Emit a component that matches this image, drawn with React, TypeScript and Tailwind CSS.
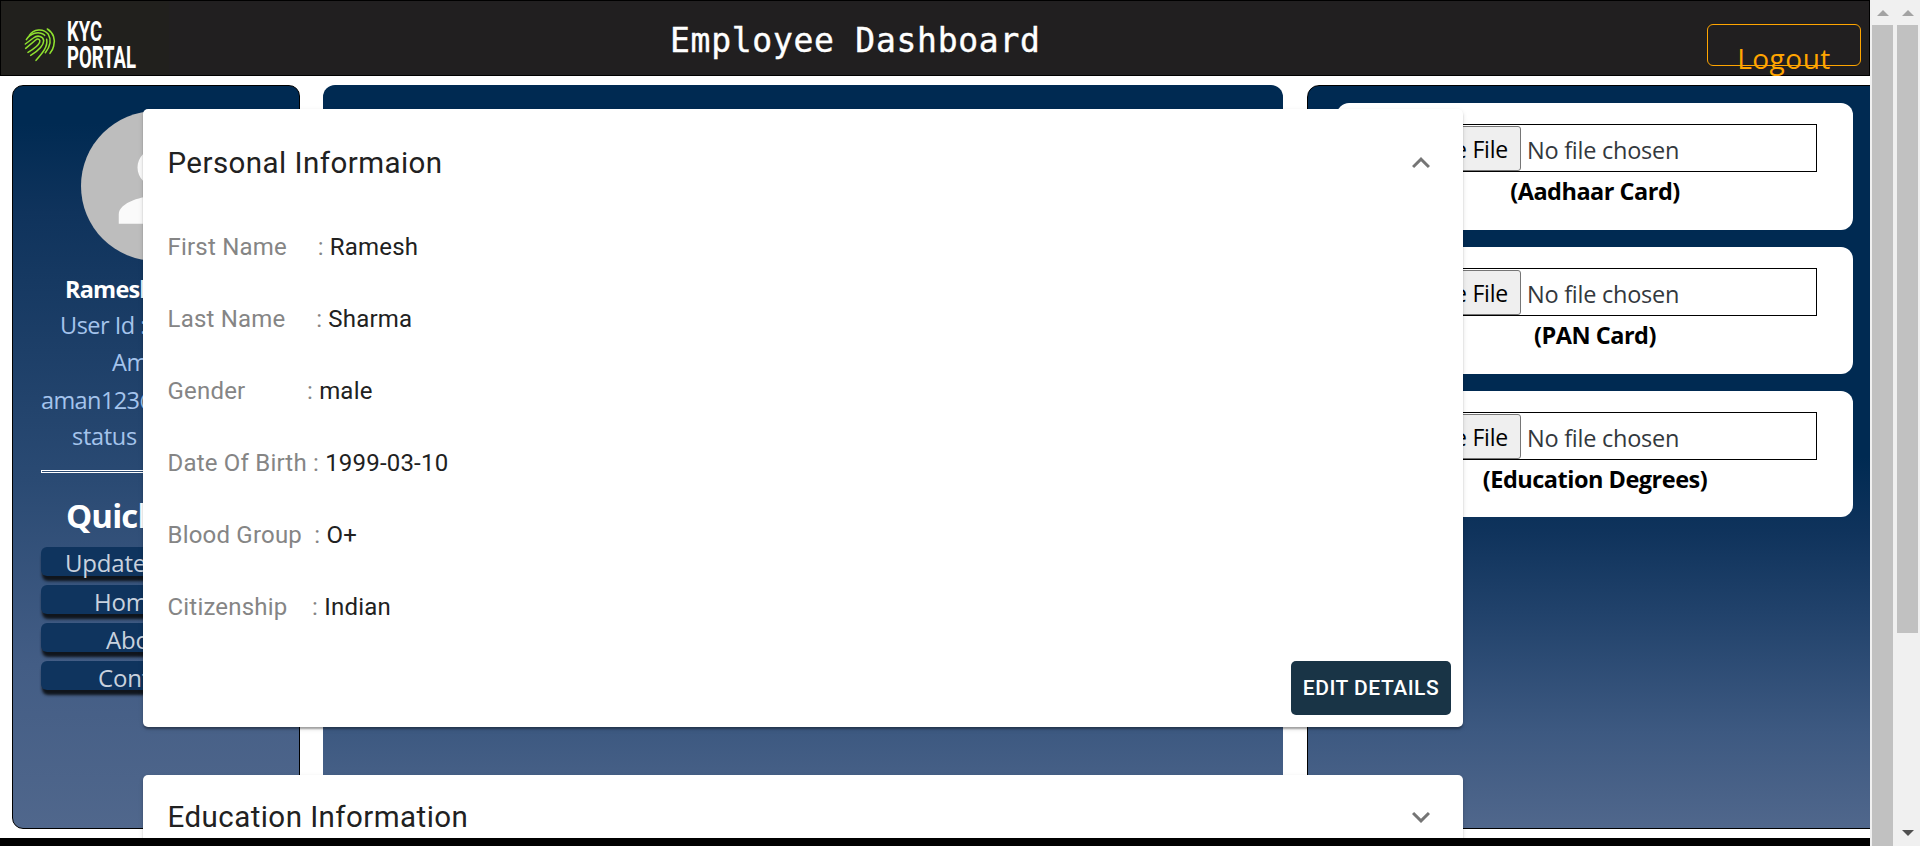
import React from "react";

const links = [
  { label: "Update", pad: "pl-[24px]", pos: "-mt-[1px]" },
  { label: "Home", pad: "pl-[53px]", pos: "mt-0" },
  { label: "About", pad: "pl-[65px]", pos: "mt-0" },
  { label: "Contact", pad: "pl-[57px]", pos: "mt-0" },
];

const documents = [
  { label: "(Aadhaar Card)", height: "h-[127px]" },
  { label: "(PAN Card)", height: "h-[127px]" },
  { label: "(Education Degrees)", height: "h-[126px]" },
];

const details = [
  { label: "First Name", gap: 5, value: "Ramesh" },
  { label: "Last Name", gap: 5, value: "Sharma" },
  { label: "Gender", gap: 10, value: "male" },
  { label: "Date Of Birth", gap: 1, value: "1999-03-10" },
  { label: "Blood Group", gap: 2, value: "O+" },
  { label: "Citizenship", gap: 4, value: "Indian" },
];

const ui = "font-['Segoe_UI','Open_Sans',sans-serif]";

function Logo() {
  return (
    <svg className="h-[74px] w-[168px] shrink-0" viewBox="1 1 168 74">
      <rect x="1" y="1" width="168" height="74" fill="#21201d" />
      <g fill="none" stroke="#8fe02f" strokeWidth="4.6" strokeLinecap="round" transform="scale(0.33333)">
        <path d="M142 87C160 98 167 118 161 138C159 148 155 154 150 160" />
        <path d="M88 106C100 87 130 83 145 103C155 120 150 140 136 158" />
        <path d="M79 119C86 108 94 103 104 100C118 96 130 101 134 106" />
        <path d="M76 132L100 114C114 103 130 110 131 122C131 138 118 150 92 166" />
        <path d="M77 145L107 120C114 114 122 119 119 127C115 138 100 148 84 157" />
        <path d="M140 118C144 140 128 158 108 181" />
      </g>
      <g fill="#fff" fontFamily="Roboto, sans-serif" fontWeight="700">
        <text x="67" y="41" fontSize="28" textLength="35" lengthAdjust="spacingAndGlyphs">KYC</text>
        <text x="67" y="68" fontSize="31.500" textLength="69" lengthAdjust="spacingAndGlyphs">PORTAL</text>
      </g>
    </svg>
  );
}

function Header() {
  return (
    <header className="relative z-10 flex h-[76px] w-[1870px] border border-black bg-[#211f20]">
      <Logo />
      <h1 className="ml-[500px] mt-[16px] w-[400px] whitespace-nowrap pl-px font-['DejaVu_Sans_Mono',monospace] text-[33px] leading-[48px] tracking-[0.72px] text-white [-webkit-text-stroke:0.4px_white]">
        Employee Dashboard
      </h1>
      <button className={`ml-[638px] mt-[23px] flex h-[42px] w-[154px] justify-center rounded-[6px] border border-[#ffa500] pt-[14px] text-[28px] leading-[38px] tracking-[0.5px] text-[#ffa500] ${ui}`}>
        Logout
      </button>
    </header>
  );
}

function Sidebar() {
  return (
    <aside className={`h-[744px] w-[288px] shrink-0 overflow-hidden rounded-[11px] border border-black bg-[linear-gradient(180deg,#002a52_0%,#002a52_5%,#0f335c_17%,#2a4a73_53%,#435d85_78%,#50678c_100%)] px-7 ${ui}`}>
      <div className="ml-10 mt-[25px] flex h-[150px] w-[150px] items-center justify-center rounded-full bg-[#bdbdbd]">
        <svg className="h-[112.5px] w-[112.5px]" viewBox="0 0 24 24" fill="#fafafa">
          <path d="M12 12c2.210 0 4-1.790 4-4s-1.790-4-4-4-4 1.790-4 4 1.790 4 4 4zm0 2c-2.670 0-8 1.340-8 4v2h16v-2c0-2.660-5.330-4-8-4z" />
        </svg>
      </div>
      <div className="mt-[10px] whitespace-nowrap text-[23.5px] leading-[37px] tracking-[-0.35px] text-[#a5c4ec]">
        <p className="pl-[24px] font-bold tracking-[-0.8px] text-white">Ramesh</p>
        <p className="-mt-px pl-[19px] tracking-[-0.5px]">User Id :</p>
        <p className="pl-[71px]">Aman</p>
        <p className="pt-px tracking-[-0.6px]">aman123@</p>
        <p className="-mt-px pl-[31px] tracking-[-0.3px]">status :</p>
      </div>
      <div className="mt-[15px] h-[3px] w-[230px] border border-white" />
      <h2 className="mt-[21px] whitespace-nowrap pl-[25px] text-[33px] font-bold leading-[44px] tracking-[-0.9px] text-white">Quick</h2>
      <nav className="mt-[9px] flex w-[230px] flex-col gap-[9px]">
        {links.map((l) => (
          <a key={l.label} className={`h-[29px] rounded-[6px] bg-[#0f345e] text-[24px] leading-[34px] tracking-[-0.2px] text-[#c9d2de] shadow-[1px_5px_3px_0_#10151c] ${l.pad}`}>
            <span className={`block ${l.pos}`}>{l.label}</span>
          </a>
        ))}
      </nav>
    </aside>
  );
}

function UploadCard({ label, height }: { label: string; height: string }) {
  return (
    <div className={`w-[516px] rounded-[12px] bg-white pl-[40px] pt-[21px] ${height}`}>
      <div className="flex h-[48px] w-[440px] items-start border border-black p-px">
        <span className="flex h-[45px] w-[142px] items-center justify-end rounded-[3px] border border-[#767676] bg-[#efefef] pr-[12px] pt-[2px] text-[23px] tracking-[-0.2px] text-black">
          Choose File
        </span>
        <span className="ml-[6px] text-[23.5px] leading-[49px] tracking-[-0.25px] text-[#33383d]">No file chosen</span>
      </div>
      <p className="w-[436px] pt-[2px] text-center text-[23.5px] font-bold leading-[34px] tracking-[-0.5px] text-black">{label}</p>
    </div>
  );
}

function Chevron({ up = false }: { up?: boolean }) {
  return (
    <svg className={`h-9 w-9 ${up ? "rotate-180" : ""}`} viewBox="0 0 24 24" fill="#757575">
      <path d="M16.590 8.590 12 13.170 7.410 8.590 6 10l6 6 6-6z" />
    </svg>
  );
}

const cardShadow = "shadow-[0_3px_2px_-1px_rgba(0,0,0,0.2),0_2px_2px_0_rgba(0,0,0,0.14),0_2px_5px_0_rgba(0,0,0,0.12)]";

function Accordions() {
  return (
    <div className="absolute left-[138px] top-[104px] z-20 flex h-[734px] w-[1335px] flex-col gap-12 overflow-hidden pl-[5px] pt-[5px] font-['Roboto',sans-serif] text-[#212121]">
      <section className={`flex h-[618px] w-[1320px] shrink-0 flex-col rounded-[5px] bg-white px-[24.5px] ${cardShadow}`}>
        <div className="flex items-center justify-between pt-[36px]">
          <h3 className="text-[29.5px] leading-[36px] tracking-[0.45px]">Personal Informaion</h3>
          <Chevron up />
        </div>
        <dl className="mt-[48px] text-[24px] leading-[36px] tracking-[0.2px]">
          {details.map((d) => (
            <div key={d.label} className="mb-[36px] flex whitespace-pre">
              <dt className="text-[#858585]">{d.label + "\u00a0".repeat(d.gap) + ":\u00a0"}</dt>
              <dd>{d.value}</dd>
            </div>
          ))}
        </dl>
        <button className="-mr-[12.5px] h-[54px] w-[160px] self-end whitespace-nowrap rounded-[5px] bg-[#193446] pt-px text-[21px] font-medium tracking-[0.5px] text-white">
          EDIT DETAILS
        </button>
      </section>
      <section className={`flex h-[108px] w-[1320px] shrink-0 justify-between rounded-[5px] bg-white px-[24.5px] pt-[24px] ${cardShadow}`}>
        <h3 className="text-[29.5px] leading-[36px] tracking-[0.45px]">Education Information</h3>
        <Chevron />
      </section>
    </div>
  );
}

function Scrollbars() {
  return (
    <div className="flex h-[846px] w-[50px] shrink-0 bg-[#f0f0f0]">
      <div className="flex w-[25px] flex-col items-center">
        <svg className="mt-[10px] h-[6px] w-[12px]" viewBox="0 0 12 6"><path d="M6 0l6 6H0z" fill="#a3a3a3" /></svg>
        <div className="mt-[9px] w-[21px] flex-1 bg-[#c1c1c1]" />
      </div>
      <div className="flex w-[25px] flex-col items-center">
        <svg className="mt-[10px] h-[6px] w-[12px]" viewBox="0 0 12 6"><path d="M6 0l6 6H0z" fill="#a3a3a3" /></svg>
        <div className="mt-[9px] h-[608px] w-[21px] bg-[#c1c1c1]" />
        <svg className="mt-[197px] h-[6px] w-[12px]" viewBox="0 0 12 6"><path d="M0 0h12L6 6z" fill="#505050" /></svg>
      </div>
    </div>
  );
}

const panelGradient = "bg-[linear-gradient(180deg,#002a52_0%,#002a52_50%,#0f335c_60%,#21426b_71%,#3d5981_87%,#50678c_100%)]";

export default function App() {
  return (
    <div className="flex h-[846px] w-[1920px] overflow-hidden bg-white">
      <div className="relative flex h-[846px] w-[1870px] shrink-0 flex-col overflow-hidden">
        <Header />
        <main className="flex h-[762px] pl-3 pt-[9px]">
          <Sidebar />
          <section className={`ml-[23px] h-[744px] w-[960px] shrink-0 rounded-[12px] ${panelGradient}`} />
          <section className={`ml-[24px] flex h-[744px] w-[600px] shrink-0 flex-col gap-[17px] rounded-[12px] border border-black pl-[29px] pt-[17px] ${panelGradient} ${ui}`}>
            {documents.map((d) => (
              <UploadCard key={d.label} label={d.label} height={d.height} />
            ))}
          </section>
        </main>
        <footer className="h-2 bg-black" />
        <Accordions />
      </div>
      <Scrollbars />
    </div>
  );
}
